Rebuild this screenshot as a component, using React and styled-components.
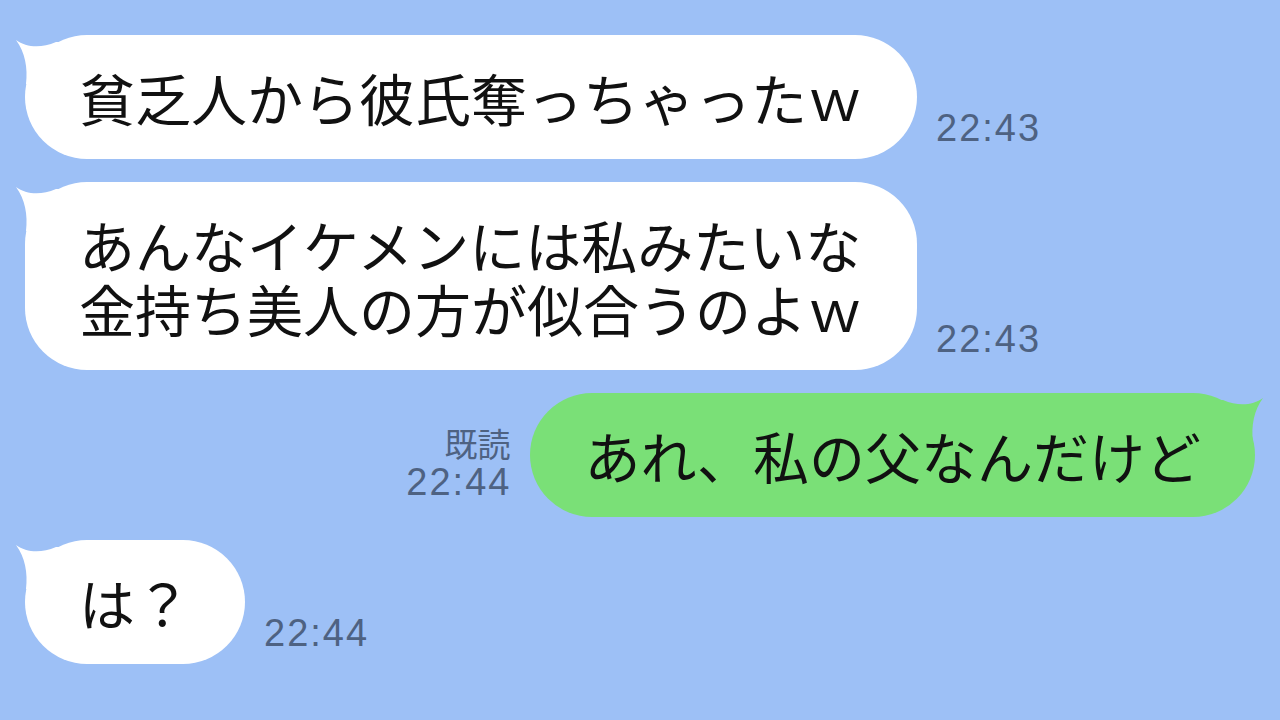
import React from "react";
import styled, { createGlobalStyle } from "styled-components";

const GlobalStyle = createGlobalStyle`
  html, body {
    margin: 0;
    padding: 0;
    background: #9dc0f6;
  }
  body {
    font-family: "Noto Sans CJK JP", "Noto Sans", sans-serif;
  }
`;

const Chat = styled.div`
  width: 1280px;
  height: 720px;
  box-sizing: border-box;
  padding: 35px 25px 0 25px;
  display: flex;
  flex-direction: column;
  gap: 23px;
  background: #9dc0f6;
  overflow: hidden;
`;

const Row = styled.div`
  display: flex;
  align-items: flex-end;
  justify-content: ${({ $mine }) => ($mine ? "flex-end" : "flex-start")};
  gap: 19px;
`;

const Bubble = styled.div`
  position: relative;
  box-sizing: border-box;
  padding: 30px 54px;
  border-radius: 62px;
  background: ${({ $mine }) => ($mine ? "#7ae077" : "#ffffff")};
  color: #111;
  font-family: "Noto Sans CJK JP", sans-serif;
  font-size: 56px;
  line-height: 64px;
  white-space: nowrap;
`;

const Line = styled.div`
  height: 64px;
`;

const TailSvg = styled.svg`
  position: absolute;
  top: 5px;
  ${({ $mine }) => ($mine ? "right: -8px; transform: scaleX(-1);" : "left: -9px;")}
  width: 46px;
  height: 44px;
  overflow: visible;
`;

const Meta = styled.div`
  display: flex;
  flex-direction: column;
  align-items: ${({ $mine }) => ($mine ? "flex-end" : "flex-start")};
  margin-bottom: ${({ $mine }) => ($mine ? "16px" : "12px")};
  color: #4e6282;
`;

const Read = styled.span`
  font-family: "Noto Sans CJK JP", sans-serif;
  font-size: 33px;
  line-height: 40px;
  margin-right: 1px;
`;

const Time = styled.span`
  font-family: "Liberation Sans", Arial, sans-serif;
  font-size: 38px;
  line-height: 38px;
  letter-spacing: 2px;
`;

const Tail = ({ mine }) => (
  <TailSvg $mine={mine} viewBox="0 0 46 44">
    <path
      d="M0 0 C 10 7, 24 9, 40 2 L 46 2 L 46 44 L 10 44 C 12 28, 9 12, 0 0 Z"
      fill={mine ? "#7ae077" : "#ffffff"}
    />
  </TailSvg>
);

const Message = ({ mine, read, time, lines }) => {
  const meta = (
    <Meta $mine={mine}>
      {read && <Read>既読</Read>}
      <Time>{time}</Time>
    </Meta>
  );
  return (
    <Row $mine={mine}>
      {mine && meta}
      <Bubble $mine={mine}>
        <Tail mine={mine} />
        {lines.map((line) => (
          <Line key={line}>{line}</Line>
        ))}
      </Bubble>
      {!mine && meta}
    </Row>
  );
};

export default function App() {
  return (
    <>
      <GlobalStyle />
      <Chat>
        <Message time="22:43" lines={["貧乏人から彼氏奪っちゃったｗ"]} />
        <Message
          time="22:43"
          lines={["あんなイケメンには私みたいな", "金持ち美人の方が似合うのよｗ"]}
        />
        <Message mine read time="22:44" lines={["あれ、私の父なんだけど"]} />
        <Message time="22:44" lines={["は？"]} />
      </Chat>
    </>
  );
}
